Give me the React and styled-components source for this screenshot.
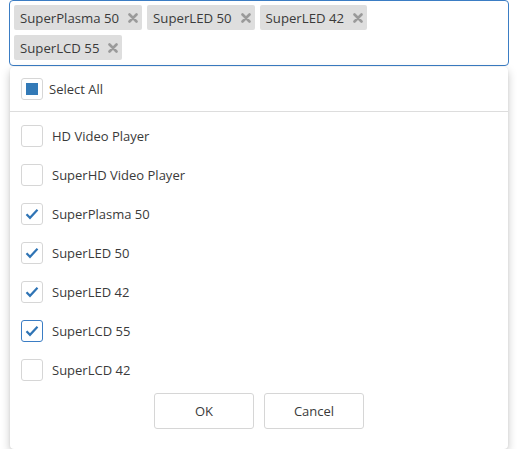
import React from 'react'
import styled, { createGlobalStyle } from 'styled-components'

const GlobalStyle = createGlobalStyle`
  body {
    margin: 0;
    background: #fff;
    font-family: "Open Sans", "Noto Sans", sans-serif;
    color: #3a3a3a;
  }
`

const tags = ['SuperPlasma 50', 'SuperLED 50', 'SuperLED 42', 'SuperLCD 55']

const items = [
  { name: 'HD Video Player', checked: false },
  { name: 'SuperHD Video Player', checked: false },
  { name: 'SuperPlasma 50', checked: true },
  { name: 'SuperLED 50', checked: true },
  { name: 'SuperLED 42', checked: true },
  { name: 'SuperLCD 55', checked: true, focused: true },
  { name: 'SuperLCD 42', checked: false },
]

function CheckMark() {
  return (
    <svg width="14" height="12" viewBox="0 0 14 12">
      <path d="M1.5 6.2 L5 9.8 L12.5 1.8" fill="none" stroke="#2f74b5" strokeWidth="2.2" />
    </svg>
  )
}

function TagClose() {
  return (
    <svg width="10" height="10" viewBox="0 0 10 10">
      <path d="M1.5 1.5 L8.5 8.5 M8.5 1.5 L1.5 8.5" stroke="#9a9a9a" strokeWidth="2.6" strokeLinecap="round" />
    </svg>
  )
}

function App() {
  return (
    <Page>
      <GlobalStyle />
      <Picker>
        {tags.map((t) => (
          <Tag key={t}>
            <span>{t}</span>
            <TagClose />
          </Tag>
        ))}
      </Picker>
      <Dropdown>
        <SelectAllRow>
          <Box>
            <Partial />
          </Box>
          <span>Select All</span>
        </SelectAllRow>
        <List>
          {items.map((it) => (
            <Item key={it.name}>
              <Box $focused={it.focused}>{it.checked && <CheckMark />}</Box>
              <span>{it.name}</span>
            </Item>
          ))}
        </List>
        <Footer>
          <Button>OK</Button>
          <Button>Cancel</Button>
        </Footer>
      </Dropdown>
    </Page>
  )
}

const Page = styled.div`
  width: 500px;
  padding: 0 9px;
`

const Picker = styled.div`
  box-sizing: border-box;
  height: 66px;
  border: 1px solid #3b7dc4;
  border-radius: 4px;
  padding: 4px 40px 4px 4px;
  display: flex;
  flex-wrap: wrap;
  align-content: flex-start;
  gap: 5px 5px;
`

const Tag = styled.div`
  height: 25px;
  box-sizing: border-box;
  background: #dedede;
  border-radius: 2px;
  padding: 0 4px 0 6px;
  display: flex;
  align-items: center;
  gap: 9px;
  font-size: 13.2px;
  color: #3a3a3a;
`

const Dropdown = styled.div`
  margin: 1px 1px 0;
  background: #fff;
  border-radius: 4px;
  box-shadow: 0 4px 10px rgba(0, 0, 0, 0.22), 0 0 2px rgba(0, 0, 0, 0.08);
`

const SelectAllRow = styled.div`
  height: 45px;
  box-sizing: border-box;
  padding: 0 11px;
  display: flex;
  align-items: center;
  gap: 6px;
  font-size: 13px;
  border-bottom: 1px solid #dddddd;
`

const Box = styled.div`
  width: 22px;
  height: 22px;
  box-sizing: border-box;
  border: 1px solid ${(p) => (p.$focused ? '#3b7dc4' : '#d6d6d6')};
  border-radius: 3px;
  display: flex;
  align-items: center;
  justify-content: center;
  flex-shrink: 0;
`

const Partial = styled.div`
  width: 12px;
  height: 12px;
  background: #337ab7;
`

const List = styled.div`
  padding: 4px 0;
`

const Item = styled.div`
  height: 39px;
  padding: 0 11px;
  display: flex;
  align-items: center;
  gap: 9px;
  font-size: 13px;
`

const Footer = styled.div`
  display: flex;
  justify-content: center;
  gap: 10px;
  padding: 0 0 20px;
`

const Button = styled.button`
  width: 100px;
  height: 36px;
  background: #fff;
  border: 1px solid #d6d6d6;
  border-radius: 3px;
  font-family: "Open Sans", "Noto Sans", sans-serif;
  font-size: 13px;
  color: #3a3a3a;
`

export default App
